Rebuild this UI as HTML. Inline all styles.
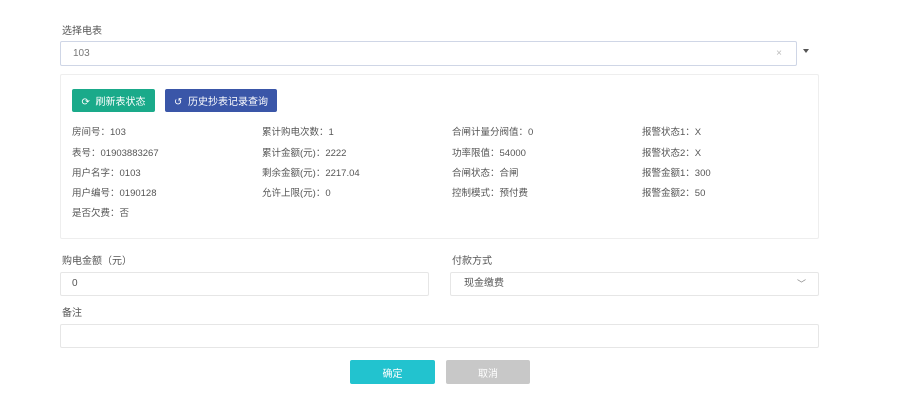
<!DOCTYPE html>
<html><head><meta charset="utf-8"><style>
*{box-sizing:border-box;margin:0;padding:0}
body{width:900px;height:414px;background:#fff;font-family:"Liberation Sans","Noto Sans CJK SC",sans-serif;font-size:10px;color:#666;position:relative;overflow:hidden}
.a{position:absolute}
.box{position:absolute;border:1px solid #e6e6e6;border-radius:2px;background:#fff}
.lbl{position:absolute;font-size:10px;color:#555;line-height:12px}
.btn{position:absolute;color:#fff;font-size:10px;display:flex;align-items:center;justify-content:center;border-radius:2px}
.info{position:absolute;font-size:9.5px;color:#555;white-space:nowrap;line-height:12px}
.v{position:absolute;top:0;line-height:24px}
</style></head><body>
<div class="lbl" style="left:62px;top:26px">选择电表</div>
<div class="box" style="left:60px;top:41px;width:737px;height:25px;border-color:#cfd6e6"><span class="v" style="left:12px;color:#777">103</span><span class="v" style="right:14px;color:#bbb">×</span></div>
<div class="a" style="left:803px;top:49px;width:0;height:0;border-left:3px solid transparent;border-right:3px solid transparent;border-top:4px solid #555"></div>
<div class="box" style="left:60px;top:74px;width:759px;height:165px;border-color:#eee"></div>
<div class="btn" style="left:72px;top:89px;width:83px;height:23px;background:#1aaa8a">⟳&nbsp; 刷新表状态</div>
<div class="btn" style="left:165px;top:89px;width:112px;height:23px;background:#3a56a8">↺&nbsp; 历史抄表记录查询</div>
<div class="info" style="left:72px;top:127px">房间号：103</div>
<div class="info" style="left:72px;top:148px">表号：01903883267</div>
<div class="info" style="left:72px;top:168px">用户名字：0103</div>
<div class="info" style="left:72px;top:188px">用户编号：0190128</div>
<div class="info" style="left:72px;top:208px">是否欠费：否</div>
<div class="info" style="left:262px;top:127px">累计购电次数：1</div>
<div class="info" style="left:262px;top:148px">累计金额(元)：2222</div>
<div class="info" style="left:262px;top:168px">剩余金额(元)：2217.04</div>
<div class="info" style="left:262px;top:188px">允许上限(元)：0</div>
<div class="info" style="left:452px;top:127px">合闸计量分阀值：0</div>
<div class="info" style="left:452px;top:148px">功率限值：54000</div>
<div class="info" style="left:452px;top:168px">合闸状态：合闸</div>
<div class="info" style="left:452px;top:188px">控制模式：预付费</div>
<div class="info" style="left:642px;top:127px">报警状态1：X</div>
<div class="info" style="left:642px;top:148px">报警状态2：X</div>
<div class="info" style="left:642px;top:168px">报警金额1：300</div>
<div class="info" style="left:642px;top:188px">报警金额2：50</div>
<div class="lbl" style="left:62px;top:256px">购电金额（元）</div>
<div class="box" style="left:60px;top:272px;width:369px;height:24px"><span class="v" style="left:11px;color:#555;line-height:22px">0</span></div>
<div class="lbl" style="left:452px;top:256px">付款方式</div>
<div class="box" style="left:450px;top:272px;width:369px;height:24px"><span class="v" style="left:13px;color:#555;line-height:22px">现金缴费</span><span class="v" style="right:12px;color:#888;font-size:9px;line-height:22px">﹀</span></div>
<div class="lbl" style="left:62px;top:308px">备注</div>
<div class="box" style="left:60px;top:324px;width:759px;height:24px"></div>
<div class="btn" style="left:350px;top:360px;width:85px;height:24px;background:#22c3cf">确定</div>
<div class="btn" style="left:446px;top:360px;width:84px;height:24px;background:#c8c8c8">取消</div>
</body></html>
